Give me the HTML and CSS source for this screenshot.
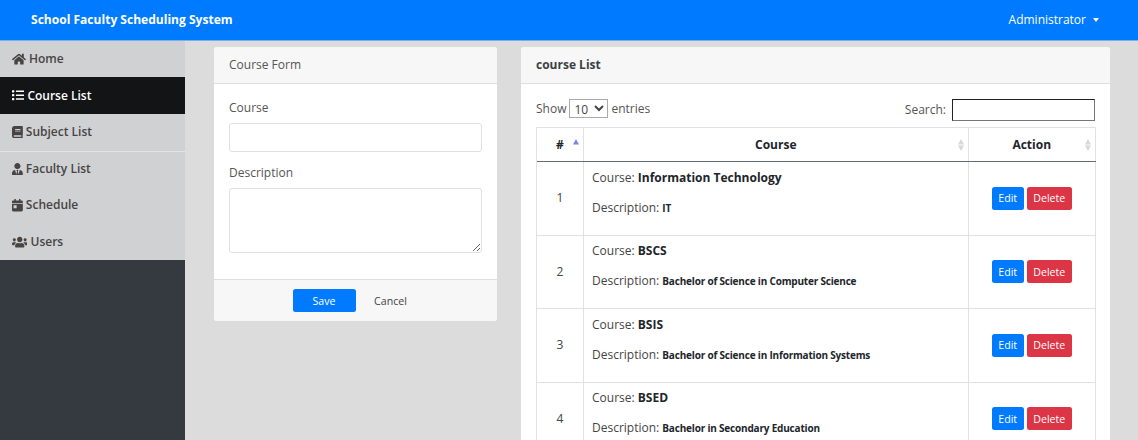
FILE: index.html
```html
<!DOCTYPE html>
<html lang="en">
<head>
<meta charset="utf-8">
<title>School Faculty Scheduling System</title>
<link rel="stylesheet" href="styles.css">
</head>
<body>
<header class="topbar">
  <strong class="brand">School Faculty Scheduling System</strong>
  <div class="account"><span class="account-name">Administrator</span><span class="caret"></span></div>
</header>
<div class="layout">
  <nav class="sidebar">
    <a class="nav-item"><svg class="icon" viewBox="0 0 576 512"><path d="M280.37 148.26L96 300.11V464a16 16 0 0 0 16 16l112.06-.29a16 16 0 0 0 15.92-16V368a16 16 0 0 1 16-16h64a16 16 0 0 1 16 16v95.64a16 16 0 0 0 16 16.05L464 480a16 16 0 0 0 16-16V300L295.67 148.26a12.19 12.19 0 0 0-15.3 0zM571.6 251.47L488 182.56V44.05a12 12 0 0 0-12-12h-56a12 12 0 0 0-12 12v72.61L318.47 43a48 48 0 0 0-61 0L4.34 251.47a12 12 0 0 0-1.6 16.9l25.5 31A12 12 0 0 0 45.15 301l235.22-193.74a12.19 12.19 0 0 1 15.3 0L530.9 301a12 12 0 0 0 16.9-1.6l25.5-31a12 12 0 0 0-1.7-16.93z"/></svg><span>Home</span></a>
    <a class="nav-item active"><svg class="icon" viewBox="0 0 512 512"><path d="M80 368H16a16 16 0 0 0-16 16v64a16 16 0 0 0 16 16h64a16 16 0 0 0 16-16v-64a16 16 0 0 0-16-16zm0-320H16A16 16 0 0 0 0 64v64a16 16 0 0 0 16 16h64a16 16 0 0 0 16-16V64a16 16 0 0 0-16-16zm0 160H16a16 16 0 0 0-16 16v64a16 16 0 0 0 16 16h64a16 16 0 0 0 16-16v-64a16 16 0 0 0-16-16zm416 176H176a16 16 0 0 0-16 16v32a16 16 0 0 0 16 16h320a16 16 0 0 0 16-16v-32a16 16 0 0 0-16-16zm0-320H176a16 16 0 0 0-16 16v32a16 16 0 0 0 16 16h320a16 16 0 0 0 16-16V80a16 16 0 0 0-16-16zm0 160H176a16 16 0 0 0-16 16v32a16 16 0 0 0 16 16h320a16 16 0 0 0 16-16v-32a16 16 0 0 0-16-16z"/></svg><span>Course List</span></a>
    <a class="nav-item"><svg class="icon" viewBox="0 0 448 512"><path d="M448 360V24c0-13.3-10.7-24-24-24H96C43 0 0 43 0 96v320c0 53 43 96 96 96h328c13.3 0 24-10.7 24-24v-16c0-7.5-3.5-14.3-8.9-18.7-4.2-15.4-4.2-59.3 0-74.7 5.4-4.3 8.9-11.1 8.9-18.6zM128 134c0-3.3 2.7-6 6-6h212c3.3 0 6 2.7 6 6v20c0 3.3-2.7 6-6 6H134c-3.3 0-6-2.7-6-6v-20zm0 64c0-3.3 2.7-6 6-6h212c3.3 0 6 2.7 6 6v20c0 3.3-2.7 6-6 6H134c-3.3 0-6-2.7-6-6v-20zm253.4 250H96c-17.7 0-32-14.3-32-32 0-17.6 14.4-32 32-32h285.4c-1.9 17.1-1.9 46.9 0 64z"/></svg><span>Subject List</span></a>
    <a class="nav-item lined"><svg class="icon" viewBox="0 0 448 512"><path d="M224 256c70.7 0 128-57.3 128-128S294.7 0 224 0 96 57.3 96 128s57.3 128 128 128zm95.8 32.6L272 480l-32-136 32-56h-96l32 56-32 136-47.8-191.4C56.9 292 0 350.3 0 422.4V464c0 26.5 21.5 48 48 48h352c26.5 0 48-21.5 48-48v-41.6c0-72.1-56.9-130.4-128.2-133.8z"/></svg><span>Faculty List</span></a>
    <a class="nav-item"><svg class="icon" viewBox="0 0 448 512"><path d="M0 464c0 26.5 21.5 48 48 48h352c26.5 0 48-21.5 48-48V192H0v272zm64-192c0-8.8 7.2-16 16-16h96c8.8 0 16 7.2 16 16v96c0 8.8-7.2 16-16 16H80c-8.8 0-16-7.2-16-16v-96zM400 64h-48V16c0-8.8-7.2-16-16-16h-32c-8.8 0-16 7.2-16 16v48H160V16c0-8.8-7.2-16-16-16h-32c-8.8 0-16 7.2-16 16v48H48C21.5 64 0 85.5 0 112v48h448v-48c0-26.5-21.5-48-48-48z"/></svg><span>Schedule</span></a>
    <a class="nav-item"><svg class="icon" viewBox="0 0 640 512"><path d="M96 224c35.3 0 64-28.7 64-64s-28.7-64-64-64-64 28.7-64 64 28.7 64 64 64zm448 0c35.3 0 64-28.7 64-64s-28.7-64-64-64-64 28.7-64 64 28.7 64 64 64zm32 32h-64c-17.6 0-33.5 7.1-45.1 18.6 40.3 22.1 68.9 62 75.1 109.4h66c17.7 0 32-14.3 32-32v-32c0-35.3-28.7-64-64-64zm-256 0c61.9 0 112-50.1 112-112S381.9 32 320 32 208 82.1 208 144s50.1 112 112 112zm76.8 32h-8.3c-20.8 10-43.9 16-68.5 16s-47.6-6-68.5-16h-8.3C179.6 288 128 339.6 128 403.2V432c0 26.5 21.5 48 48 48h288c26.5 0 48-21.5 48-48v-28.8c0-63.6-51.6-115.2-115.2-115.2zm-223.7-13.4C161.5 263.1 145.6 256 128 256H64c-35.3 0-64 28.7-64 64v32c0 17.7 14.3 32 32 32h65.9c6.3-47.4 34.9-87.3 75.2-109.4z"/></svg><span>Users</span></a>
  </nav>
  <main class="content">
    <form class="card form-card">
      <div class="card-header">Course Form</div>
      <div class="form-body">
        <label class="label" for="course">Course</label>
        <input class="field" id="course" type="text">
        <label class="label" for="description">Description</label>
        <textarea class="field area" id="description"></textarea>
      </div>
      <div class="card-footer">
        <button class="btn save" type="button">Save</button>
        <button class="btn cancel" type="button">Cancel</button>
      </div>
    </form>
    <section class="card list-card">
      <div class="card-header"><b>course List</b></div>
      <div class="list-body">
        <div class="tools">
          <label class="length">Show <select class="select"><option>10</option></select> entries</label>
          <label class="search">Search: <input class="search-box" type="text"></label>
        </div>
        <div class="table">
          <div class="row head">
            <div class="cell">#<svg class="sort" viewBox="0 0 6 12"><path fill="#8284e2" d="M3 0l3 5.4H0z"/></svg></div>
            <div class="cell">Course<svg class="sort" viewBox="0 0 6 12"><path fill="#d8d8d8" d="M3 0l3 5.4H0zM3 12L0 6.6h6z"/></svg></div>
            <div class="cell">Action<svg class="sort" viewBox="0 0 6 12"><path fill="#d8d8d8" d="M3 0l3 5.4H0zM3 12L0 6.6h6z"/></svg></div>
          </div>
          <div class="row">
            <div class="cell num">1</div>
            <div class="cell info"><p class="line">Course: <b>Information Technology</b></p><p class="line">Description: <b class="small">IT</b></p></div>
            <div class="cell actions"><button class="btn edit">Edit</button><button class="btn delete">Delete</button></div>
          </div>
          <div class="row">
            <div class="cell num">2</div>
            <div class="cell info"><p class="line">Course: <b>BSCS</b></p><p class="line">Description: <b class="small">Bachelor of Science in Computer Science</b></p></div>
            <div class="cell actions"><button class="btn edit">Edit</button><button class="btn delete">Delete</button></div>
          </div>
          <div class="row">
            <div class="cell num">3</div>
            <div class="cell info"><p class="line">Course: <b>BSIS</b></p><p class="line">Description: <b class="small">Bachelor of Science in Information Systems</b></p></div>
            <div class="cell actions"><button class="btn edit">Edit</button><button class="btn delete">Delete</button></div>
          </div>
          <div class="row">
            <div class="cell num">4</div>
            <div class="cell info"><p class="line">Course: <b>BSED</b></p><p class="line">Description: <b class="small">Bachelor in Secondary Education</b></p></div>
            <div class="cell actions"><button class="btn edit">Edit</button><button class="btn delete">Delete</button></div>
          </div>
        </div>
      </div>
    </section>
  </main>
</div>
</body>
</html>
```
FILE: styles.css
```css
* { box-sizing: border-box; }
body { margin: 0; height: 440px; overflow: hidden; background: #dcdcdc; color: #444; font: 12px/18px "Open Sans", sans-serif; }
button, input, select, textarea { font: inherit; color: inherit; }
b { font-weight: 700; color: #212529; }

.topbar { height: 41px; padding: 0 39px 1px 31px; display: flex; justify-content: space-between; align-items: center; background: #007bff; border-bottom: 1px solid #7ab0e8; color: #fff; }
.brand { font-size: 12.05px; }
.account { display: flex; align-items: center; gap: 7px; }
.caret { border: 3.5px solid transparent; border-top: 4px solid #fff; border-bottom: 0; }

.layout { height: 399px; display: flex; overflow: hidden; }
.sidebar { width: 185px; flex: none; background: #343a40; }
.nav-item { height: 36.6px; padding: 0 12px; display: flex; align-items: center; gap: 3px; background: #cfd1d3; color: #484444; font-weight: 600; }
.nav-item:first-child { height: 36.4px; }
.nav-item.active { background: #121416; color: #fff; }
.nav-item.lined { padding-bottom: 1px; border-top: 1px solid #e2e3e4; }
.icon { height: 12.4px; flex: none; fill: currentColor; }

.content { flex: 1; padding: 6px 28px 0 29px; display: flex; align-items: flex-start; gap: 24px; }
.card { background: #fff; border-radius: 3px; }
.card-header { height: 37px; padding: 0 15px; display: flex; align-items: center; background: #f7f7f7; border-bottom: 1px solid #dfdfdf; border-radius: 3px 3px 0 0; color: #555; }
.card-header b { color: #3c3f42; }
.form-card { width: 283px; flex: none; color: #555; }
.form-body { height: 195px; padding: 15px; }
.label { display: block; margin-bottom: 6px; }
.field { display: block; width: 253px; height: 29px; margin-bottom: 12px; border: 1px solid #dde1e5; border-radius: 3px; background: #fff; }
.area { height: 65px; }
.card-footer { height: 42px; padding-right: 2px; display: flex; justify-content: center; align-items: center; gap: 9px; background: #f7f7f7; border-top: 1px solid #dfdfdf; border-radius: 0 0 3px 3px; }
.btn { height: 23px; padding: 0; border: 0; border-radius: 2.5px; font-size: 10.6px; color: #fff; }
.save { width: 63px; background: #007bff; }
.cancel { width: 52px; background: transparent; color: #444; }

.list-card { flex: 1; height: 430px; }
.list-body { padding: 15px 14px 0 15px; }
.tools { height: 28px; padding-right: 1px; display: flex; justify-content: space-between; align-items: flex-start; color: #555; }
.length { display: flex; align-items: center; gap: 3px; }
.select { width: 39px; height: 19px; padding: 0; border: 1px solid #aaa; border-radius: 0; background: #fff; color: #444; }
.search { display: flex; align-items: center; gap: 6px; }
.search-box { width: 143px; height: 22px; border: 1px solid #777; border-top: 1px solid #222; border-left-color: #222; background: #fff; }
.table { border-left: 1px solid #dee2e6; border-top: 1px solid #dee2e6; }
.row { height: 73.5px; display: grid; grid-template-columns: 47px 384.5px 1fr; border-bottom: 1px solid #dee2e6; }
.head { height: 34px; border-bottom-color: #666b70; font-weight: 700; color: #212529; }
.cell { position: relative; display: flex; justify-content: center; align-items: center; border-right: 1px solid #dee2e6; }
.sort { position: absolute; right: 4px; top: 11px; width: 6px; height: 12px; }
.info { flex-direction: column; align-items: flex-start; justify-content: flex-start; padding: 6.5px 8px; gap: 12px; }
.line { margin: 0; }
.small { font-size: 10px; letter-spacing: -0.19px; }
.actions { gap: 3px; }
.edit { width: 32px; background: #007bff; }
.delete { width: 45px; background: #dc3545; }
```
